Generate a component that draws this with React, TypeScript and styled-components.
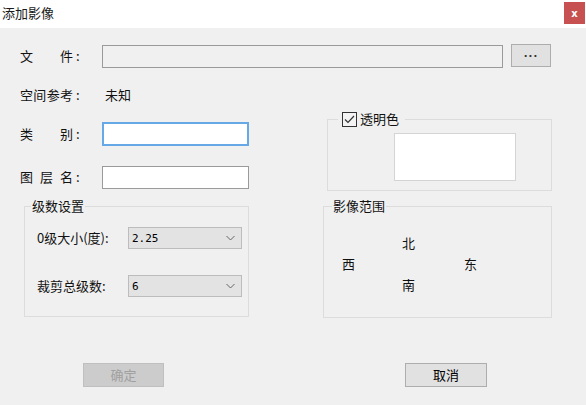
import styled, { createGlobalStyle } from 'styled-components';

const GlobalStyle = createGlobalStyle`
  html, body {
    margin: 0;
    padding: 0;
    background: #f0f0f0;
  }
  * {
    box-sizing: border-box;
  }
`;

const FONT = `"Noto Sans CJK SC", "Noto Sans", sans-serif`;

const Window = styled.div`
  width: 586px;
  height: 405px;
  background: #f0f0f0;
  font-family: ${FONT};
  font-size: 13px;
  color: #111;
  display: flex;
  flex-direction: column;
  overflow: hidden;
`;

const TitleBar = styled.div`
  height: 28px;
  background: #ffffff;
  display: flex;
  align-items: flex-start;
  justify-content: space-between;
  flex-shrink: 0;
`;

const Title = styled.div`
  padding: 4px 0 0 2px;
  font-size: 13px;
  line-height: 18px;
  color: #1a1a1a;
`;

const CloseButton = styled.div`
  width: 21px;
  height: 22px;
  margin: 2px 1px 0 0;
  background: #c75050;
  color: #fff;
  font-family: "DejaVu Sans", sans-serif;
  font-size: 10px;
  font-weight: bold;
  display: flex;
  align-items: center;
  justify-content: center;
`;

const Body = styled.div`
  padding: 0 0 0 20px;
  display: flex;
  flex-direction: column;
`;

const Row = styled.div<{ $top: number; $h?: number }>`
  display: flex;
  align-items: center;
  margin-top: ${(p) => p.$top}px;
  height: ${(p) => p.$h ?? 24}px;
`;

const LabelBox = styled.div`
  display: flex;
  align-items: center;
  width: 82px;
  flex-shrink: 0;
`;

const LabelChars = styled.div`
  width: 53px;
  display: flex;
  justify-content: space-between;
  line-height: 18px;
`;

const Colon = styled.span`
  margin-left: 3px;
  line-height: 18px;
`;

const Label = ({ text }: { text: string }) => (
  <LabelBox>
    <LabelChars>
      {text.split('').map((c, i) => (
        <span key={i}>{c}</span>
      ))}
    </LabelChars>
    <Colon>:</Colon>
  </LabelBox>
);

const Value = styled.span`
  margin-left: 3px;
  line-height: 18px;
`;

const TextBox = styled.div<{ $width?: number; $variant?: 'disabled' | 'focus' | 'normal' }>`
  height: 23px;
  width: ${(p) => (p.$width ? `${p.$width}px` : 'auto')};
  flex: ${(p) => (p.$width ? '0 0 auto' : '1 1 auto')};
  background: ${(p) => (p.$variant === 'disabled' ? '#f0f0f0' : '#ffffff')};
  border: ${(p) =>
    p.$variant === 'focus' ? '2px solid #66a9e6' : '1px solid #9a9a9a'};
  box-shadow: ${(p) => (p.$variant === 'focus' ? 'inset 0 0 0 0 #fff' : 'none')};
`;

const PushButton = styled.div<{ $disabled?: boolean; $width: number }>`
  width: ${(p) => p.$width}px;
  height: 24px;
  display: flex;
  align-items: center;
  justify-content: center;
  background: ${(p) => (p.$disabled ? '#cccccc' : '#e1e1e1')};
  border: 1px solid ${(p) => (p.$disabled ? '#bfbfbf' : '#adadad')};
  color: ${(p) => (p.$disabled ? '#a0a0a0' : '#000')};
  font-size: 13px;
  line-height: 18px;
`;

const BrowseButton = styled(PushButton)`
  height: 23px;
  margin: -1px 0 0 8px;
  font-family: "DejaVu Sans", sans-serif;
  font-weight: bold;
  font-size: 10px;
  letter-spacing: 1px;
  color: #333;
  padding-bottom: 3px;
`;

const FileRow = styled(Row)`
  padding-right: 35px;
`;

const Columns = styled.div`
  display: flex;
  gap: 74px;
`;

const LeftColumn = styled.div`
  width: 229px;
  display: flex;
  flex-direction: column;
`;

const RightColumn = styled.div`
  width: 229px;
  display: flex;
  flex-direction: column;
`;

const Group = styled.fieldset<{ $top: number; $left?: number; $h: number }>`
  margin: ${(p) => p.$top}px 0 0 ${(p) => p.$left ?? 0}px;
  padding: 0;
  height: ${(p) => p.$h}px;
  border: 1px solid #dcdcdc;
  min-width: 0;
`;

const Legend = styled.legend<{ $offset: number }>`
  margin-left: ${(p) => p.$offset}px;
  padding: 0 1px;
  font-size: 13px;
  line-height: 16px;
  height: 16px;
  display: flex;
  align-items: center;
`;

const CheckLegend = styled(Legend)`
  padding: 0 6px 0 4px;
  gap: 3px;
`;

const LevelBody = styled.div`
  padding: 13px 0 0 12px;
  display: flex;
  flex-direction: column;
  gap: 26px;
`;

const LevelRow = styled.div`
  display: flex;
  align-items: center;
  height: 22px;
`;

const LevelLabel = styled.span`
  width: 91px;
  flex-shrink: 0;
  line-height: 18px;
  white-space: nowrap;
`;

const Combo = styled.div`
  width: 114px;
  height: 22px;
  background: #e3e3e3;
  border: 1px solid #bcbcbc;
  display: flex;
  align-items: center;
  justify-content: space-between;
  padding: 0 6px 0 3px;
  font-family: "DejaVu Sans Mono", monospace;
  font-size: 11px;
  color: #000;
`;

const ColorBox = styled.div`
  margin: 6px 0 0 66px;
  width: 122px;
  height: 48px;
  background: #ffffff;
  border: 1px solid #d4d4d4;
`;

const Compass = styled.div`
  padding: 18px 0 0 18px;
  display: grid;
  grid-template-columns: 60px 62px 40px;
  grid-template-rows: repeat(3, 21px);
  align-items: center;
  line-height: 18px;
`;

const CompassCell = styled.span<{ $col: number; $row: number }>`
  grid-column: ${(p) => p.$col};
  grid-row: ${(p) => p.$row};
`;

const ButtonRow = styled.div`
  display: flex;
  align-items: center;
  margin-top: 45px;
  padding-left: 63px;
  gap: 241px;
`;

const Chevron = () => (
  <svg width="9" height="6" viewBox="0 0 9 6">
    <path d="M0.5 1 L4.5 5 L8.5 1" fill="none" stroke="#666" strokeWidth="1" />
  </svg>
);

const CheckBox = () => (
  <svg width="15" height="15" viewBox="0 0 15 15">
    <rect x="0.5" y="0.5" width="14" height="14" fill="#f4f4f4" stroke="#333" />
    <path d="M3 7.5 L6 10.5 L12 4" fill="none" stroke="#333" strokeWidth="1.2" />
  </svg>
);

export default function App() {
  return (
    <>
      <GlobalStyle />
      <Window>
        <TitleBar>
          <Title>添加影像</Title>
          <CloseButton>x</CloseButton>
        </TitleBar>
        <Body>
          <FileRow $top={16} $h={24}>
            <Label text="文件" />
            <TextBox $variant="disabled" />
            <BrowseButton $width={40}>...</BrowseButton>
          </FileRow>
          <Row $top={15}>
            <Label text="空间参考" />
            <Value>未知</Value>
          </Row>
          <Columns>
            <LeftColumn>
              <Row $top={15}>
                <Label text="类别" />
                <TextBox $width={147} $variant="focus" style={{ height: 24 }} />
              </Row>
              <Row $top={19}>
                <Label text="图层名" />
                <TextBox $width={147} $variant="normal" />
              </Row>
              <Group $top={9} $left={4} $h={119}>
                <Legend $offset={6}>级数设置</Legend>
                <LevelBody>
                  <LevelRow>
                    <LevelLabel>0级大小(度):</LevelLabel>
                    <Combo>
                      <span>2.25</span>
                      <Chevron />
                    </Combo>
                  </LevelRow>
                  <LevelRow>
                    <LevelLabel>裁剪总级数:</LevelLabel>
                    <Combo>
                      <span>6</span>
                      <Chevron />
                    </Combo>
                  </LevelRow>
                </LevelBody>
              </Group>
            </LeftColumn>
            <RightColumn>
              <Group $top={4} $left={4} $h={80}>
                <CheckLegend $offset={10}>
                  <CheckBox />
                  <span>透明色</span>
                </CheckLegend>
                <ColorBox />
              </Group>
              <Group $top={7} $h={120}>
                <Legend $offset={8}>影像范围</Legend>
                <Compass>
                  <CompassCell $col={2} $row={1}>北</CompassCell>
                  <CompassCell $col={1} $row={2}>西</CompassCell>
                  <CompassCell $col={3} $row={2}>东</CompassCell>
                  <CompassCell $col={2} $row={3}>南</CompassCell>
                </Compass>
              </Group>
            </RightColumn>
          </Columns>
          <ButtonRow>
            <PushButton $disabled $width={81}>确定</PushButton>
            <PushButton $width={82}>取消</PushButton>
          </ButtonRow>
        </Body>
      </Window>
    </>
  );
}
